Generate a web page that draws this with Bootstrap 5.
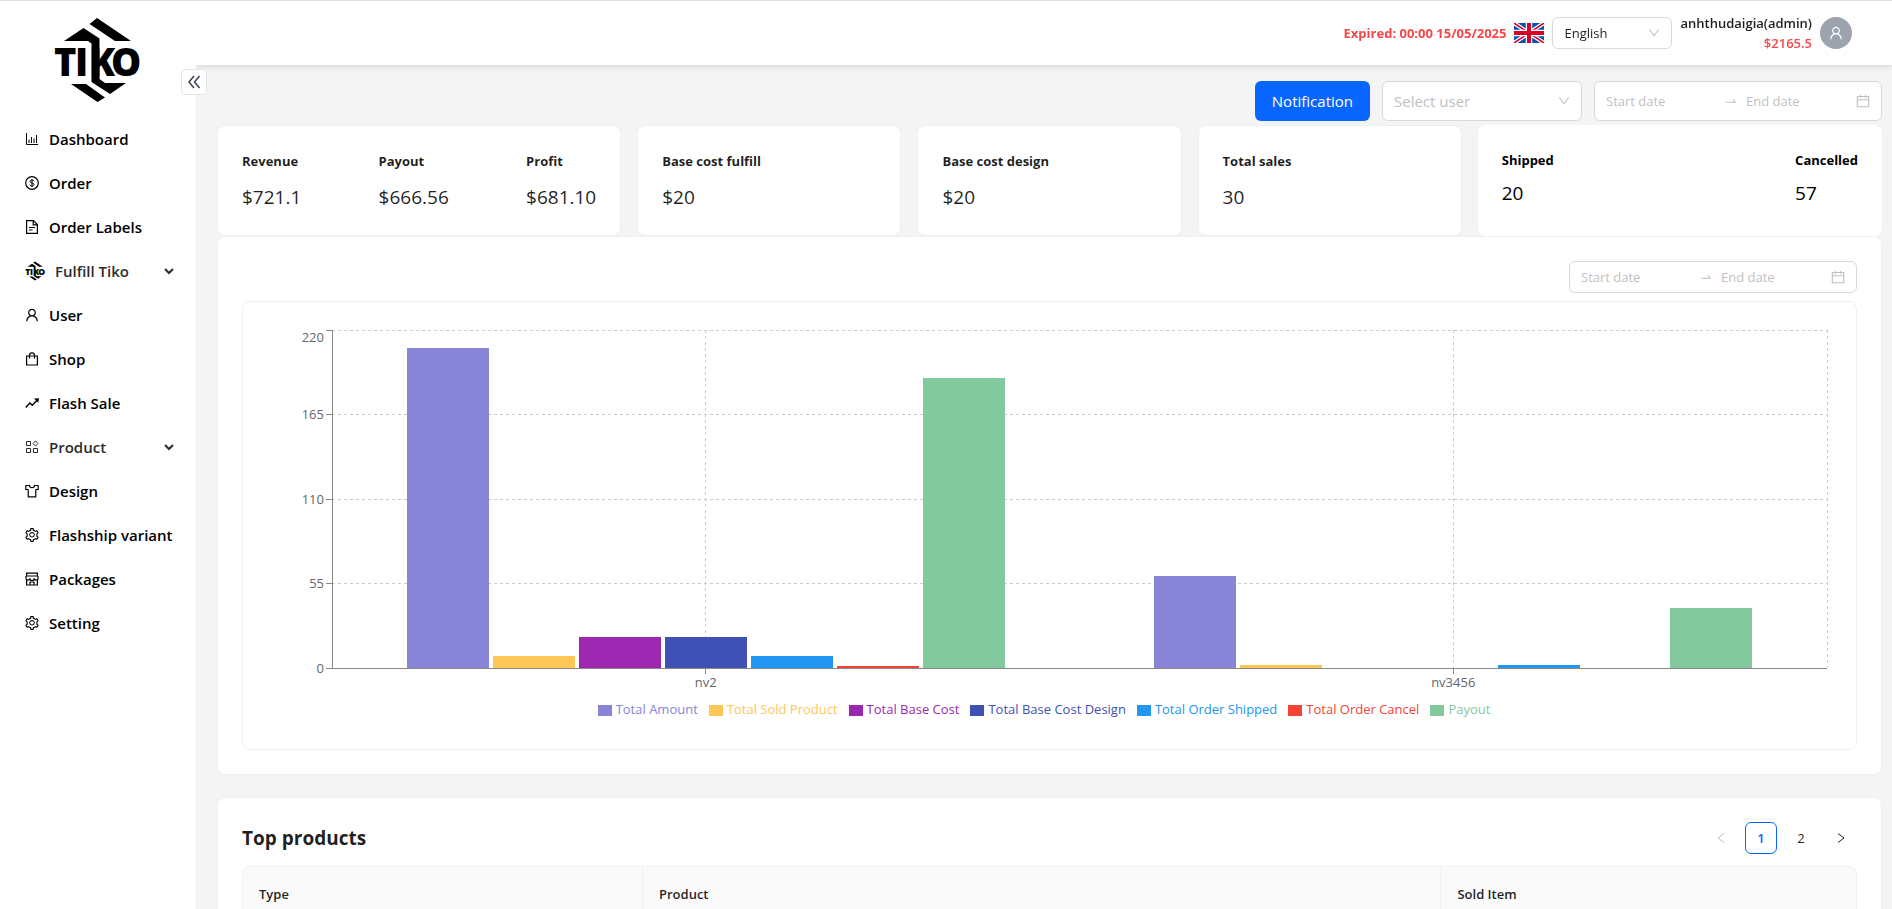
<!DOCTYPE html>
<html lang="en">
<head>
<meta charset="utf-8">
<meta name="viewport" content="width=device-width, initial-scale=1">
<title>Tiko Dashboard</title>
<link href="https://cdn.jsdelivr.net/npm/bootstrap@5.3.0/dist/css/bootstrap.min.css" rel="stylesheet">
<style>
  :root { --line: #f0f0f0; --ctl: #d9d9d9; --ink: rgba(0,0,0,.88); --hint: #bfbfbf; --brand: #0866ff; }
  body { font-family: "Open Sans", "Noto Sans", sans-serif; font-size: 13px; line-height: 22px; color: var(--ink); border-top: 1px solid #dedede; background: #fff; }
  svg { display: block; flex: none; }
  .ico { width: 14px; height: 14px; fill: currentColor; }
  .ico.pen { fill: none; stroke: currentColor; }
  .fw-6 { font-weight: 600; }
  .red { color: #f5474a; }

  .side { width: 196px; z-index: 2; }
  .brand-box { padding: 16px 0 14px 53px; }
  .brand-box svg, .menu svg { overflow: visible; }
  .fold { left: 181px; top: 68px; width: 26px; height: 26px; border: 1px solid #e2e4e8; border-radius: 4px; color: #374151; }
  .menu a { height: 44px; padding: 0 22px 0 25px; gap: 10px; font-size: 15px; color: #000; text-decoration: none; }
  .menu a.parent { color: #2b2b2b; }
  .menu a.parent svg:last-child { margin-left: auto; }

  .topbar { height: 64px; padding-right: 40px; z-index: 1; box-shadow: 0 1px 6px rgba(0,21,41,.16); }
  .two-lines { line-height: 20px; }
  .face { width: 32px; height: 32px; background: #9ca3af; color: #fff; }

  .page { background: #f4f4f4; border-left: 1px solid var(--line); padding: 16px 10px 24px 20px; scrollbar-width: none; }
  .page::-webkit-scrollbar { display: none; }
  .filters { gap: 12px; }
  .ctl { height: 32px; border: 1px solid var(--ctl); border-radius: 6px; background-color: #fff; font-size: 13px; color: var(--ink); }
  .pick { appearance: none; padding: 0 11px; background-repeat: no-repeat; background-position: right 11px center; background-size: 12px;
    background-image: url("data:image/svg+xml,%3Csvg xmlns='http://www.w3.org/2000/svg' viewBox='64 64 896 896' fill='%23bfbfbf'%3E%3Cpath d='M884 256h-75c-5.1 0-9.9 2.5-12.9 6.6L512 654.2 227.9 262.6c-3-4.1-7.8-6.6-12.9-6.6h-75c-6.5 0-10.3 7.4-6.5 12.7l352.6 486.1c12.8 17.6 39 17.6 51.7 0l352.6-486.1c3.9-5.3.1-12.7-6.4-12.7z'/%3E%3C/svg%3E"); }
  .pick-lang { width: 120px; }
  .tall { height: 40px; }
  .pick-user { width: 200px; font-size: 15px; color: var(--hint); }
  .range { width: 288px; padding: 0 11px; color: var(--hint); }
  .range input { width: 0; flex: 1; border: 0; padding: 0; outline: 0; background: none; color: var(--ink); }
  .range input::placeholder { color: var(--hint); opacity: 1; }
  .btn-note { height: 40px; border-radius: 6px; background: var(--brand); color: #fff; font-size: 15px; padding: 0 16px; }

  .tiles { display: grid; grid-template-columns: 404fr 264fr 264fr 264fr 404fr; gap: 16px; margin-top: 4px; }
  .tile { background: #fff; border: 1px solid var(--line); border-radius: 8px; padding: 23px 24px 22px; margin: 0; }
  .tile dt { font-weight: 700; line-height: 24px; margin-bottom: 8px; }
  .tile dd { font-weight: 500; font-size: 19px; line-height: 32px; margin: 0; }
  .tile.flat { border: 0; padding: 24px; color: #000; }
  .tile.flat dt { line-height: 22px; }
  .tile.flat dd { line-height: 28px; }

  .panel { background: #fff; border: 1px solid var(--line); border-radius: 8px; padding: 24px; }
  .panel + .panel { margin-top: 22px; }
  .chart-box { border: 1px solid var(--line); border-radius: 8px; padding: 28px 29px 29px 89px; margin-top: 8px; }
  .plot { height: 338px; margin-bottom: 30px; }
  .plot > svg { overflow: visible; }
  .plot text { font-size: 13px; fill: #666; }
  .bars > div { padding: 0 5%; flex: 1; gap: 4px; }
  .bars i { flex: 1; height: calc(var(--v) / 220 * 100%); background: var(--c); }
  .c1 { --c: #8884d8; } .c2 { --c: #ffc658; } .c3 { --c: #9c27b0; } .c4 { --c: #3f51b5; }
  .c5 { --c: #2196f3; } .c6 { --c: #f44336; } .c7 { --c: #82ca9d; }
  .keys { gap: 11px; margin: 0 10px 0 -61px; }
  .keys li { display: flex; align-items: center; gap: 4px; color: var(--c); }
  .keys li::before { content: ""; width: 14px; height: 11px; margin-top: 2px; background: var(--c); }

  .panel h2 { font-size: 19px; line-height: 32px; font-weight: 700; }
  .pager { gap: 8px; }
  .pager a { width: 32px; height: 32px; border: 1px solid transparent; border-radius: 6px; color: var(--ink); text-decoration: none; }
  .pager .now { border-color: var(--brand); color: var(--brand); font-weight: 600; }
  .pager .off { color: var(--hint); }
  .goods { width: 100%; margin-top: 12px; border-collapse: separate; border-spacing: 0; border: 1px solid var(--line); border-radius: 8px; table-layout: fixed; }
  .goods th { background: #fafafa; padding: 16px; font-weight: 600; border-right: 1px solid var(--line); border-bottom: 1px solid var(--line); }
  .goods th:first-child { border-top-left-radius: 8px; width: 24.8%; }
  .goods th:nth-child(2) { width: 49.5%; }
  .goods th:last-child { border-top-right-radius: 8px; border-right: 0; }
</style>
</head>
<body class="vh-100 overflow-hidden d-flex">

<svg width="0" height="0" class="position-absolute" aria-hidden="true">
  <symbol id="tiko" viewBox="53 17 88 86" overflow="visible">
    <path d="M97 18l34 23h-16L89.500 24zM64 41l19.500-13 16 10.500V79l5.500 4h21l-16 11-18.500-12V43.500L88 41zM71 84h15l19 13.500-7.500 4.500z"/>
    <g font-family="Open Sans" font-weight="800" font-size="38"><text x="54" y="76">T</text><text x="75" y="76">I</text><text x="89" y="76">K</text><text x="111" y="76">O</text></g>
  </symbol>
  <symbol id="gear" viewBox="64 64 896 896"><path d="M924.8 625.7l-65.5-56c3.1-19 4.7-38.4 4.7-57.8s-1.6-38.8-4.7-57.8l65.5-56a32.03 32.03 0 009.3-35.2l-.9-2.6a443.74 443.74 0 00-79.700-137.900l-1.800-2.100a32.120 32.120 0 00-35.100-9.500l-81.300 28.900c-30-24.600-63.500-44-99.700-57.600l-15.700-85a32.050 32.050 0 00-25.800-25.700l-2.700-.5c-52.100-9.400-106.900-9.400-159 0l-2.700.5a32.050 32.050 0 00-25.800 25.700l-15.800 85.400a351.860 351.860 0 00-99 57.400l-81.900-29.100a32 32 0 00-35.100 9.500l-1.800 2.100a446.020 446.020 0 00-79.700 137.900l-.9 2.600c-4.500 12.500-.8 26.500 9.300 35.200l66.300 56.600c-3.100 18.800-4.600 38-4.600 57.100 0 19.200 1.500 38.400 4.600 57.100L99 625.500a32.030 32.030 0 00-9.300 35.200l.9 2.600c18.100 50.400 44.900 96.900 79.700 137.900l1.800 2.100a32.120 32.120 0 0035.100 9.500l81.900-29.100c29.800 24.500 63.100 43.900 99 57.400l15.800 85.400a32.050 32.050 0 0025.800 25.700l2.700.5a449.400 449.400 0 00159 0l2.700-.5a32.050 32.050 0 0025.800-25.700l15.700-85a350 350 0 0099.700-57.600l81.300 28.900a32 32 0 0035.100-9.500l1.800-2.100c34.800-41.100 61.600-87.500 79.700-137.900l.9-2.600c4.500-12.300.8-26.300-9.300-35zM788.300 465.900c2.500 15.100 3.800 30.600 3.800 46.100s-1.300 31-3.800 46.100l-6.600 40.100 74.700 63.900a370.030 370.030 0 01-42.600 73.600L721 702.800l-31.400 25.800c-23.900 19.600-50.500 35-79.300 45.800l-38.100 14.300-17.900 97a377.500 377.500 0 01-85 0l-17.900-97.200-37.800-14.500c-28.500-10.800-55-26.200-78.700-45.700l-31.400-25.900-93.400 33.200c-17-22.900-31.200-47.600-42.600-73.600l75.500-64.500-6.500-40c-2.400-14.900-3.700-30.300-3.700-45.500 0-15.300 1.200-30.600 3.700-45.500l6.500-40-75.500-64.500c11.300-26.100 25.600-50.700 42.600-73.600l93.400 33.200 31.400-25.900c23.700-19.500 50.200-34.900 78.700-45.700l37.900-14.300 17.900-97.200c28.100-3.200 56.800-3.200 85 0l17.900 97 38.100 14.300c28.700 10.800 55.400 26.200 79.300 45.800l31.400 25.800 92.800-32.900c17 22.900 31.200 47.600 42.600 73.600L781.800 426l6.500 39.900zM512 326c-97.200 0-176 78.800-176 176s78.800 176 176 176 176-78.800 176-176-78.800-176-176-176zm79.200 255.200A111.600 111.600 0 01512 614c-29.900 0-58-11.700-79.200-32.800A111.600 111.600 0 01400 502c0-29.900 11.700-58 32.800-79.200C454 401.600 482.100 390 512 390c29.900 0 58 11.600 79.200 32.800A111.600 111.600 0 01624 502c0 29.900-11.700 58-32.800 79.200z"/></symbol>
  <symbol id="person" viewBox="64 64 896 896"><path d="M858.500 763.600a374 374 0 00-80.600-119.500 375.630 375.630 0 00-119.500-80.600c-.4-.2-.8-.3-1.200-.5C719.500 518 760 444.700 760 362c0-137-111-248-248-248S264 225 264 362c0 82.700 40.500 156 102.800 201.100-.4.2-.8.3-1.200.5-44.800 18.900-85 46-119.500 80.600a375.630 375.630 0 00-80.600 119.500A371.700 371.700 0 00136 901.800a8 8 0 008 8.200h60c4.400 0 7.900-3.500 8-7.800 2-77.200 33-149.500 87.800-204.300 56.700-56.700 132-87.900 212.200-87.900s155.500 31.200 212.200 87.900C779 752.700 810 825 812 902.200c.1 4.400 3.600 7.800 8 7.800h60a8 8 0 008-8.200c-1-47.800-10.900-94.300-29.500-138.200zM512 534c-45.900 0-89.100-17.900-121.600-50.400S340 407.900 340 362c0-45.900 17.900-89.100 50.400-121.600S466.100 190 512 190s89.100 17.900 121.600 50.400S684 316.100 684 362c0 45.900-17.900 89.100-50.400 121.600S557.900 534 512 534z"/></symbol>
  <symbol id="cal" viewBox="64 64 896 896"><path d="M880 184H712v-64c0-4.400-3.600-8-8-8h-56c-4.400 0-8 3.600-8 8v64H384v-64c0-4.400-3.600-8-8-8h-56c-4.400 0-8 3.600-8 8v64H144c-17.700 0-32 14.300-32 32v664c0 17.700 14.300 32 32 32h736c17.700 0 32-14.300 32-32V216c0-17.700-14.300-32-32-32zm-40 656H184V460h656v380zM184 392V256h128v48c0 4.400 3.600 8 8 8h56c4.400 0 8-3.600 8-8v-48h256v48c0 4.400 3.600 8 8 8h56c4.400 0 8-3.600 8-8v-48h128v136H184z"/></symbol>
  <symbol id="swap" viewBox="0 0 1024 1024"><path d="M873.100 596.200l-164-208A32 32 0 00684 376h-64.800c-6.700 0-10.400 7.700-6.300 13l144.300 183H152c-4.400 0-8 3.600-8 8v60c0 4.400 3.600 8 8 8h695.900c26.800 0 41.700-30.800 25.200-51.800z"/></symbol>
  <symbol id="caret" viewBox="0 0 10 10"><path d="M1 3l4 4 4-4" fill="none" stroke="currentColor" stroke-width="2"/></symbol>
</svg>

<aside class="side position-relative bg-white flex-shrink-0 h-100">
  <div class="brand-box"><svg width="88" height="86" role="img" aria-label="Tiko"><use href="#tiko"/></svg></div>
  <button type="button" class="fold position-absolute bg-white p-0 d-flex align-items-center justify-content-center" aria-label="Collapse menu">
    <svg width="14" height="14" viewBox="0 0 14 14" fill="none" stroke="currentColor" stroke-width="1.500"><path d="M7 1L2 7l5 6M12.500 1l-5 6 5 6"/></svg>
  </button>
  <nav class="menu fw-6">
    <a href="#" class="d-flex align-items-center"><svg class="ico pen" viewBox="0 0 14 14"><path d="M1.500 1v11.500H13M4 11V7.500M6.500 11V5M9 11V6.500M11.500 11V3"/></svg>Dashboard</a>
    <a href="#" class="d-flex align-items-center"><svg class="ico pen" viewBox="0 0 14 14"><circle cx="7" cy="7" r="6.300" stroke-width="1.200"/><path d="M9 5.300C8.800 4.400 8 4 7 4c-1.200 0-2 .6-2 1.500C5 7.500 9 6.500 9 8.600 9 9.500 8.200 10 7 10s-2-.5-2.200-1.400M7 3v8"/></svg>Order</a>
    <a href="#" class="d-flex align-items-center"><svg class="ico pen" viewBox="0 0 14 14"><path stroke-width="1.200" d="M8.500.6H1.600v12.800h10.800V4.500zM8.200.8v4h4M4 7.500h6M4 10h3.500"/></svg>Order Labels</a>
    <a href="#" class="parent d-flex align-items-center"><svg width="20" height="20"><use href="#tiko"/></svg>Fulfill Tiko<svg width="10" height="10"><use href="#caret"/></svg></a>
    <a href="#" class="d-flex align-items-center"><svg class="ico"><use href="#person"/></svg>User</a>
    <a href="#" class="d-flex align-items-center"><svg class="ico pen" viewBox="0 0 14 14"><path stroke-width="1.200" d="M1.600 4h10.800v9H1.600zM4.500 6.500V3.300a2.500 2.500 0 015 0v3.200"/></svg>Shop</a>
    <a href="#" class="d-flex align-items-center"><svg class="ico pen" viewBox="0 0 14 14"><path stroke-width="1.400" d="M.8 11.500l4-4.500 2.500 2.300 5-5.300"/><path fill="currentColor" stroke="none" d="M9 2.500l5-.3-.8 4.500z"/></svg>Flash Sale</a>
    <a href="#" class="parent d-flex align-items-center"><svg class="ico pen" viewBox="0 0 14 14"><path d="M1.500 1.500h4v4h-4zM1.500 8.500h4v4h-4zM8.500 8.500h4v4h-4zM10.500.9l2.400 2.600-2.400 2.600-2.400-2.600z"/></svg>Product<svg width="10" height="10"><use href="#caret"/></svg></a>
    <a href="#" class="d-flex align-items-center"><svg class="ico pen" viewBox="0 0 14 14"><path stroke-width="1.200" stroke-linejoin="round" d="M4.500 1.500H.8v4h2.400v7.300h7.600V5.500h2.400v-4H9.500a2.500 2.200 0 01-5 0z"/></svg>Design</a>
    <a href="#" class="d-flex align-items-center"><svg class="ico"><use href="#gear"/></svg>Flashship variant</a>
    <a href="#" class="d-flex align-items-center"><svg class="ico pen" viewBox="0 0 14 14"><path stroke-width="1.200" d="M1.600 7v6h10.800V7M1.600 1.200h10.800V4H1.600zM1 4v1.500a2 2 0 004 1 2 2 0 004 0 2 2 0 004-1V4M5 13v-3h4v3"/></svg>Packages</a>
    <a href="#" class="d-flex align-items-center"><svg class="ico"><use href="#gear"/></svg>Setting</a>
  </nav>
</aside>

<div class="d-flex flex-column flex-grow-1 h-100 overflow-hidden">
  <header class="topbar bg-white d-flex align-items-center justify-content-end gap-2 position-relative flex-shrink-0">
    <span class="red fw-bold">Expired: 00:00 15/05/2025</span>
    <svg width="30" height="20" viewBox="0 0 60 40" role="img" aria-label="United Kingdom">
      <path fill="#0052b4" d="M0 0h60v40H0z"/><path stroke="#fff" stroke-width="8" d="M0 0l60 40M60 0L0 40"/><path stroke="#d80027" stroke-width="3" d="M0 0l60 40M60 0L0 40"/>
      <path stroke="#fff" stroke-width="13" d="M30 0v40M0 20h60"/><path stroke="#d80027" stroke-width="8" d="M30 0v40M0 20h60"/>
    </svg>
    <select class="ctl pick pick-lang" aria-label="Language"><option>English</option></select>
    <div class="two-lines text-end fw-6"><div>anhthudaigia(admin)</div><div class="red">$2165.5</div></div>
    <span class="face rounded-circle d-flex align-items-center justify-content-center"><svg class="ico"><use href="#person"/></svg></span>
  </header>

  <main class="page flex-grow-1 overflow-auto">
    <div class="filters d-flex justify-content-end">
      <button type="button" class="btn btn-note">Notification</button>
      <select class="ctl pick tall pick-user" aria-label="Select user"><option>Select user</option></select>
      <div class="ctl range tall d-flex align-items-center">
        <input type="text" placeholder="Start date" aria-label="Start date"><svg class="ico mx-2"><use href="#swap"/></svg><input type="text" placeholder="End date" aria-label="End date"><svg class="ico"><use href="#cal"/></svg>
      </div>
    </div>

    <section class="tiles">
      <dl class="tile d-flex justify-content-between">
        <div><dt>Revenue</dt><dd>$721.1</dd></div>
        <div><dt>Payout</dt><dd>$666.56</dd></div>
        <div><dt>Profit</dt><dd>$681.10</dd></div>
      </dl>
      <dl class="tile"><dt>Base cost fulfill</dt><dd>$20</dd></dl>
      <dl class="tile"><dt>Base cost design</dt><dd>$20</dd></dl>
      <dl class="tile"><dt>Total sales</dt><dd>30</dd></dl>
      <dl class="tile flat d-flex justify-content-between">
        <div><dt>Shipped</dt><dd>20</dd></div>
        <div><dt>Cancelled</dt><dd>57</dd></div>
      </dl>
    </section>

    <section class="panel">
      <div class="ctl range d-flex align-items-center ms-auto">
        <input type="text" placeholder="Start date" aria-label="Chart start date"><svg class="ico mx-2"><use href="#swap"/></svg><input type="text" placeholder="End date" aria-label="Chart end date"><svg class="ico"><use href="#cal"/></svg>
      </div>
      <div class="chart-box">
        <div class="plot position-relative">
          <svg width="100%" height="338">
            <g stroke="#ccc" stroke-dasharray="3 3" shape-rendering="crispEdges">
              <line x1="0" x2="100%" y1="0" y2="0"/><line x1="0" x2="100%" y1="84" y2="84"/><line x1="0" x2="100%" y1="169" y2="169"/><line x1="0" x2="100%" y1="253" y2="253"/>
              <line x1="25%" x2="25%" y1="0" y2="338"/><line x1="75%" x2="75%" y1="0" y2="338"/><line x1="100%" x2="100%" y1="0" y2="338"/>
            </g>
            <g stroke="#888" shape-rendering="crispEdges">
              <line x1="0" x2="0" y1="0" y2="338"/><line x1="-6" x2="100%" y1="338" y2="338"/>
              <line x1="-6" x2="0" y1="0" y2="0"/><line x1="-6" x2="0" y1="84" y2="84"/><line x1="-6" x2="0" y1="169" y2="169"/><line x1="-6" x2="0" y1="253" y2="253"/>
              <line x1="25%" x2="25%" y1="338" y2="344"/><line x1="75%" x2="75%" y1="338" y2="344"/>
            </g>
            <g text-anchor="end"><text x="-8" y="12">220</text><text x="-8" y="89">165</text><text x="-8" y="174">110</text><text x="-8" y="258">55</text><text x="-8" y="343">0</text></g>
            <g text-anchor="middle"><text x="25%" y="357">nv2</text><text x="75%" y="357">nv3456</text></g>
          </svg>
          <div class="bars d-flex position-absolute top-0 start-0 w-100 h-100">
            <div class="d-flex align-items-end">
              <i class="c1" style="--v:208"></i><i class="c2" style="--v:8"></i><i class="c3" style="--v:20"></i><i class="c4" style="--v:20"></i><i class="c5" style="--v:8"></i><i class="c6" style="--v:1"></i><i class="c7" style="--v:189"></i>
            </div>
            <div class="d-flex align-items-end">
              <i class="c1" style="--v:60"></i><i class="c2" style="--v:2"></i><i class="c3" style="--v:0"></i><i class="c4" style="--v:0"></i><i class="c5" style="--v:2"></i><i class="c6" style="--v:0"></i><i class="c7" style="--v:39"></i>
            </div>
          </div>
        </div>
        <ul class="keys list-unstyled d-flex justify-content-center">
          <li class="c1">Total Amount</li><li class="c2">Total Sold Product</li><li class="c3">Total Base Cost</li><li class="c4">Total Base Cost Design</li><li class="c5">Total Order Shipped</li><li class="c6">Total Order Cancel</li><li class="c7">Payout</li>
        </ul>
      </div>
    </section>

    <section class="panel">
      <div class="d-flex justify-content-between">
        <h2 class="m-0">Top products</h2>
        <nav class="pager d-flex" aria-label="Pages">
          <a href="#" class="off d-flex align-items-center justify-content-center" aria-label="Previous"><svg width="12" height="12" viewBox="0 0 12 12" fill="none" stroke="currentColor"><path d="M9 1.500L3 6l6 4.500"/></svg></a>
          <a href="#" class="now d-flex align-items-center justify-content-center">1</a>
          <a href="#" class="d-flex align-items-center justify-content-center">2</a>
          <a href="#" class="d-flex align-items-center justify-content-center" aria-label="Next"><svg width="12" height="12" viewBox="0 0 12 12" fill="none" stroke="currentColor"><path d="M3 1.500L9 6l-6 4.500"/></svg></a>
        </nav>
      </div>
      <table class="goods"><thead><tr><th scope="col">Type</th><th scope="col">Product</th><th scope="col">Sold Item</th></tr></thead></table>
    </section>
  </main>
</div>
<script src="https://cdn.jsdelivr.net/npm/bootstrap@5.3.0/dist/js/bootstrap.bundle.min.js"></script>
</body>
</html>
